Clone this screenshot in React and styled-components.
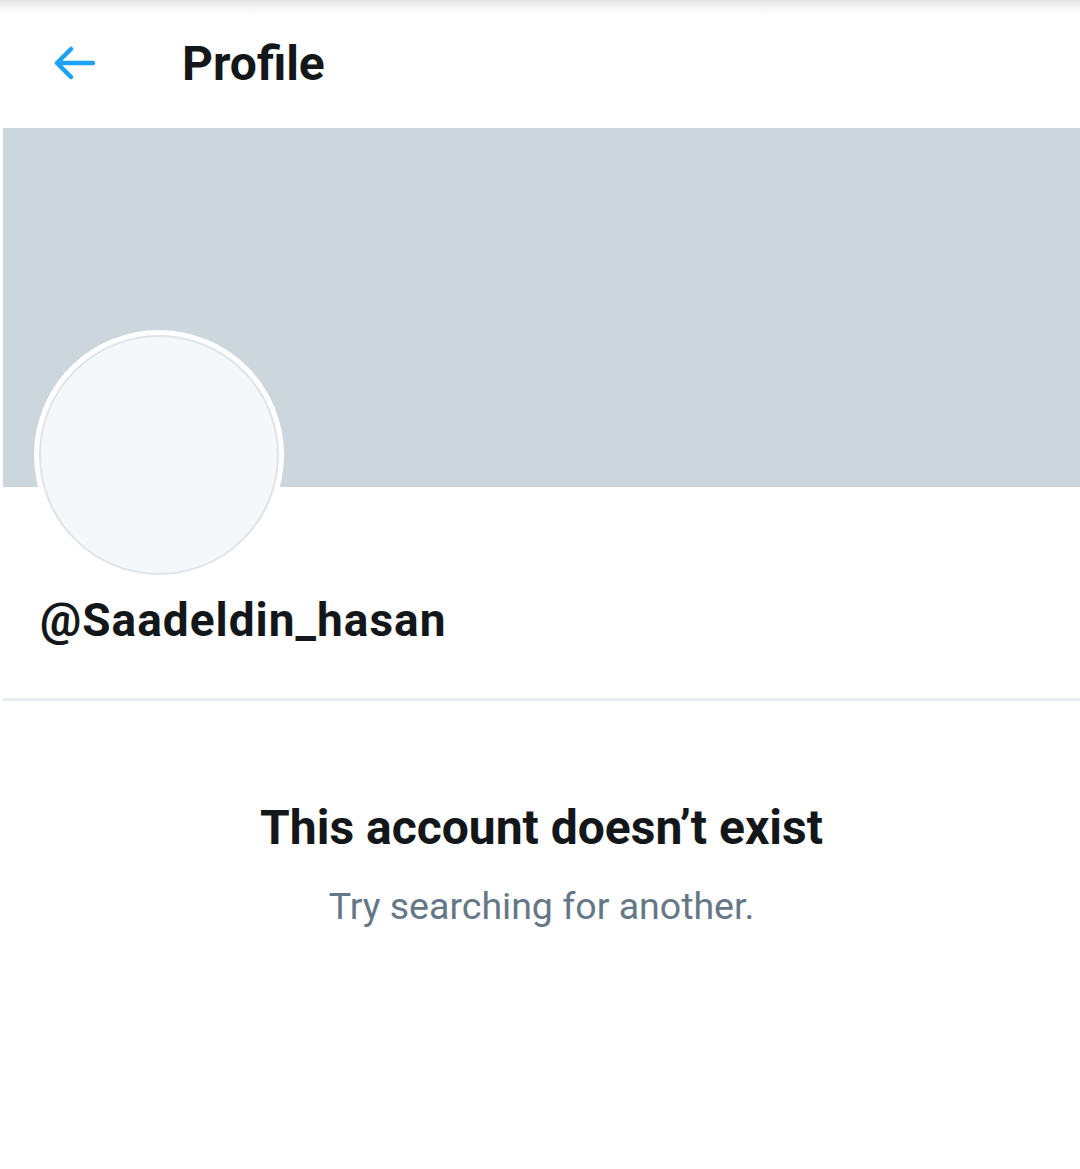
import React from 'react'
import styled, { createGlobalStyle } from 'styled-components'

const GlobalStyle = createGlobalStyle`
    html, body {
        margin: 0;
        padding: 0;
        background: #ffffff;
    }
    body {
        font-family: Roboto, "Liberation Sans", Arial, sans-serif;
        color: #14171a;
    }
`

function BackArrow() {
    return (
        <svg width="42" height="36" viewBox="0 0 42 36" fill="none">
            <path
                d="M3 18H39M3 18L17 4M3 18L17 32"
                stroke="#1da1f2"
                strokeWidth="4.5"
                strokeLinecap="round"
                strokeLinejoin="round"
            />
        </svg>
    )
}

function App() {
    return (
        <Page>
            <GlobalStyle />
            <Header>
                <BackButton aria-label="Back">
                    <BackArrow />
                </BackButton>
                <Title>Profile</Title>
            </Header>
            <Body>
                <Banner />
                <ProfileInfo>
                    <Avatar>
                        <AvatarInner />
                    </Avatar>
                    <Handle>@Saadeldin_hasan</Handle>
                </ProfileInfo>
                <Divider />
                <Empty>
                    <EmptyTitle>This account doesn’t exist</EmptyTitle>
                    <EmptyText>Try searching for another.</EmptyText>
                </Empty>
            </Body>
        </Page>
    )
}

export default App

const Page = styled.div`
    width: 1080px;
    min-height: 1169px;
    background: #fff;
    overflow: hidden;
`
const Header = styled.header`
    height: 128px;
    display: flex;
    align-items: center;
    background: linear-gradient(to bottom, #e2e2e2 0px, #f6f6f6 8px, #ffffff 16px);
    box-sizing: border-box;
    padding-left: 54px;
    padding-bottom: 2px;
`
const BackButton = styled.div`
    display: flex;
    align-items: center;
    width: 42px;
    height: 36px;
    margin-right: 86px;
`
const Title = styled.h1`
    margin: 0;
    font-size: 48px;
    font-weight: 700;
    color: #14171a;
    letter-spacing: 0px;
`
const Body = styled.main`
    padding-left: 3px;
`
const Banner = styled.div`
    height: 359px;
    background: #ccd6dd;
`
const ProfileInfo = styled.div`
    position: relative;
    padding: 105px 0 50px 37px;
`
const Avatar = styled.div`
    position: absolute;
    left: 31px;
    top: -157px;
    width: 250px;
    height: 250px;
    border-radius: 50%;
    background: #ffffff;
    display: flex;
    align-items: center;
    justify-content: center;
`
const AvatarInner = styled.div`
    width: 236px;
    height: 236px;
    border-radius: 50%;
    background: #f5f8fa;
    border: 2px solid #dfe4e8;
`
const Handle = styled.div`
    font-size: 46px;
    font-weight: 700;
    line-height: 56px;
    letter-spacing: 1px;
    color: #14171a;
`
const Divider = styled.div`
    height: 3px;
    background: #e6ecf0;
`
const Empty = styled.div`
    display: flex;
    flex-direction: column;
    align-items: center;
    padding-top: 97px;
`
const EmptyTitle = styled.h2`
    margin: 0;
    font-size: 48px;
    font-weight: 700;
    line-height: 60px;
    color: #14171a;
`
const EmptyText = styled.p`
    margin: 24px 0 0;
    font-size: 37.5px;
    font-weight: 400;
    line-height: 48px;
    color: #657786;
`
